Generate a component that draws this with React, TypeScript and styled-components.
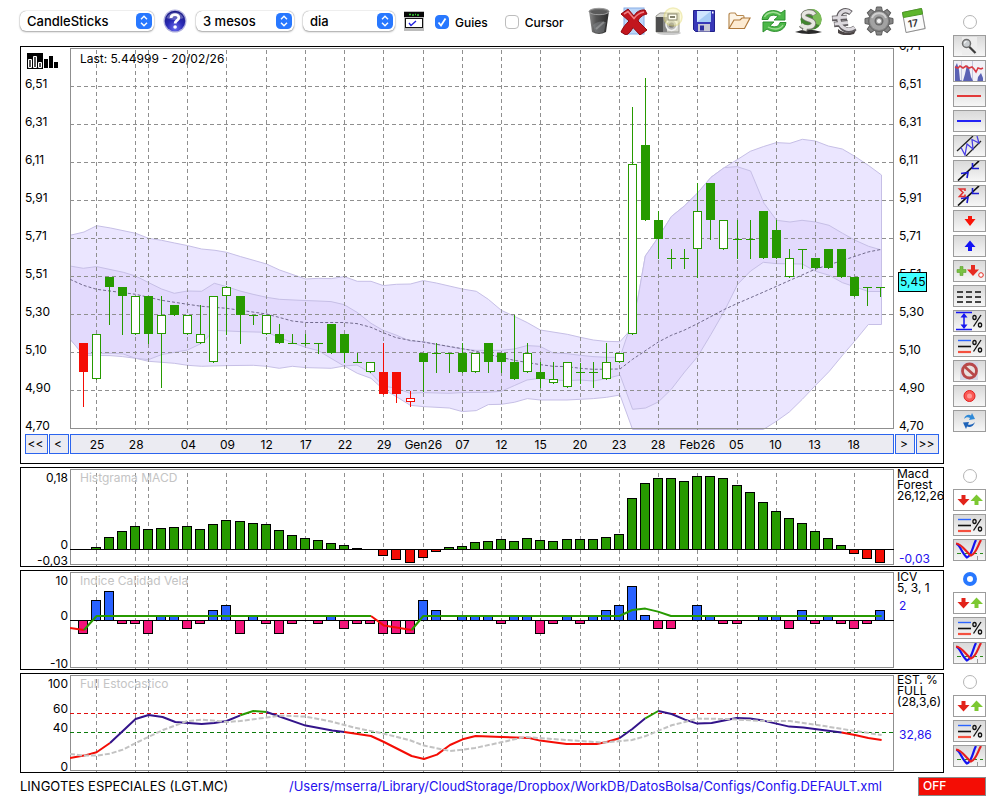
import React from "react";
import styled, { createGlobalStyle, css } from "styled-components";

const GREEN = "#279a00";
const RED = "#f40d05";
const NAVY = "#33148a";
const GRID = "#8f8f8f";

const GlobalStyle = createGlobalStyle`
  * { box-sizing: border-box; }
  body {
    margin: 0;
    background: #fff;
    color: #000;
    font-family: Inter, "Liberation Sans", sans-serif;
    font-size: 12px;
  }
  button, select, input { font: inherit; color: inherit; margin: 0; }
`;

/* ---------- layout ---------- */

const Page = styled.main`
  display: grid;
  grid-template-columns: minmax(0, 1fr) 33px;
  column-gap: 9px;
  row-gap: 3px;
  padding: 0 14px 0 20px;
`;

const Toolbar = styled.header`
  display: flex;
  align-items: center;
  gap: 9px;
  height: 46px;
  padding: 0 14px 4px 0;
`;

const Panel = styled.section`
  border: 1px solid #000;
  overflow: hidden;
`;

const PlotRow = styled.div<{ $height: number }>`
  display: grid;
  grid-template-columns: 49px minmax(0, 1fr) 49px;
  height: ${(p) => p.$height}px;
  overflow: hidden;
`;

const PlotArea = styled.div`
  position: relative;
  padding-top: 1px;
`;

const PlotSvg = styled.svg`
  display: block;
  width: 100%;
`;

const PlotTitle = styled.h2<{ $muted?: boolean }>`
  position: absolute;
  top: ${(p) => (p.$muted ? 1 : 3)}px;
  left: 10px;
  margin: 0;
  font-size: 12px;
  font-weight: 400;
  line-height: 18px;
  color: ${(p) => (p.$muted ? "#c4c4c4" : "#000")};
`;

const PriceAxis = styled.div<{ $right?: boolean }>`
  position: relative;
  padding-left: 4px;
  line-height: 38px;
  ${(p) => p.$right && css`margin-top: -20px; padding-left: 5px;`}
`;

const PriceLabel = styled.div`
  height: 38px;
`;

const AxisIcon = styled.div`
  height: 18px;
  padding: 6px 0 0 2px;
  line-height: 0;
`;

const PriceTag = styled.div`
  position: absolute;
  left: 4px;
  top: 245px;
  padding: 0 1px;
  border: 1px solid #000;
  background: #40ffff;
  line-height: 18px;
`;

/* ---------- date navigation ---------- */

const DateNav = styled.nav`
  display: grid;
  grid-template-columns: 23px 20px minmax(0, 1fr) 20px 23px;
  gap: 1px;
  padding: 0 4px 9px;
`;

const NavButton = styled.button`
  height: 20px;
  padding: 0 2px 0 0;
  border: 1px solid #2b64ee;
  background: #ebebf2;
  line-height: 18px;
  text-align: center;
`;

const DateStrip = styled.div`
  display: grid;
  grid-template-columns: repeat(63, minmax(0, 1fr));
  height: 20px;
  border: 1px solid #2b64ee;
  background: #ebebf2;
`;

const DateLabel = styled.span<{ $slot: number }>`
  grid-row: 1;
  grid-column: ${(p) => p.$slot - 1} / span 4;
  line-height: 20px;
  text-align: center;
`;

/* ---------- indicator panels ---------- */

const AxisSvg = styled.svg`
  display: block;
  width: 49px;
  height: 98px;
`;

const Legend = styled.div`
  padding-left: 3px;
  line-height: 11px;
  white-space: nowrap;
`;

const LegendValue = styled.div<{ $gap: number }>`
  margin-top: ${(p) => p.$gap}px;
  padding-left: 2px;
  line-height: 16px;
  color: #2410ee;
`;

/* ---------- side tools ---------- */

const SideTools = styled.aside<{ $main?: boolean }>`
  display: flex;
  flex-direction: column;
  align-items: center;
  gap: 3px;
  padding-top: ${(p) => (p.$main ? 15 : 2)}px;
`;

const Radio = styled.input`
  appearance: none;
  width: 14px;
  height: 14px;
  margin-bottom: 3px;
  border: 1px solid #b5b5b5;
  border-radius: 50%;
  background: #fff;
  &:checked {
    border: 4px solid #2878ff;
  }
`;

const ToolButton = styled.button<{ $plain?: boolean }>`
  display: flex;
  align-items: center;
  justify-content: center;
  width: 33px;
  height: 22px;
  padding: 0;
  overflow: hidden;
  border: 1px solid #9c9c9c;
  background: ${(p) => (p.$plain ? "#fff" : "linear-gradient(#d9d9d9, #f6f6f6)")};
  svg { display: block; flex: none; }
`;

/* ---------- toolbar controls ---------- */

const SelectBox = styled.span<{ $width: number }>`
  position: relative;
  width: ${(p) => p.$width}px;
  flex: none;
`;

const Select = styled.select`
  appearance: none;
  display: block;
  width: 100%;
  height: 20px;
  padding: 0 20px 1px 7px;
  border: 0;
  border-radius: 6px;
  background: #fff;
  box-shadow: 0 0 1px #777, 0 1px 2px #aaa;
  font-size: 13px;
  font-weight: 500;
  line-height: 18px;
`;

const SelectBadge = styled.svg`
  position: absolute;
  top: 2px;
  right: 2px;
  pointer-events: none;
`;

const IconButton = styled.button`
  display: flex;
  align-items: center;
  justify-content: center;
  flex: none;
  padding: 0;
  border: 0;
  background: none;
  svg { display: block; }
`;

const IconGroup = styled.div`
  display: flex;
  flex: 1;
  justify-content: space-between;
  margin-left: 4px;
  ${IconButton} { width: 32px; height: 32px; }
`;

const CheckLabel = styled.label`
  display: flex;
  align-items: center;
  gap: 6px;
  margin: 2px 6px 0 2px;
  font-weight: 500;
`;

const Check = styled.input`
  appearance: none;
  width: 14px;
  height: 14px;
  border: 1px solid #bdbdbd;
  border-radius: 4px;
  background: #fff;
  &:checked {
    border-color: #2878ff;
    background: #2878ff;
  }
`;

const CheckBoxWrap = styled.span`
  position: relative;
  display: flex;
  svg { position: absolute; inset: 0; pointer-events: none; }
`;

/* ---------- footer ---------- */

const Footer = styled.footer`
  grid-column: 1 / -1;
  display: flex;
  align-items: center;
  height: 20px;
`;

const FooterText = styled.span`
  font-size: 13px;
  line-height: 20px;
`;

const FooterLink = styled.a`
  margin-left: auto;
  margin-right: 36px;
  color: #2410ee;
  font-size: 13px;
  line-height: 20px;
  text-decoration: none;
`;

const OffButton = styled.button`
  width: 68px;
  height: 19px;
  padding: 0 4px;
  border: 1px solid #8a8a8a;
  background: ${RED};
  color: #fff;
  font-weight: 500;
  line-height: 16px;
  text-align: left;
`;

/* ---------- chart data ---------- */

const LEFT = 70;
const WIDTH = 824;
const SLOT = 13.079;
const slotX = (i: number) => Math.floor(LEFT + SLOT * i);

const DATES: [number, string][] = [
  [2, "25"], [5, "28"], [9, "04"], [12, "09"], [15, "12"], [18, "17"], [21, "22"],
  [24, "29"], [27, "Gen26"], [30, "07"], [33, "12"], [36, "15"], [39, "20"], [42, "23"],
  [45, "28"], [48, "Feb26"], [51, "05"], [54, "10"], [57, "13"], [60, "18"],
];
const GUIDES = [2, 5, 6, 9, 12, 15, 18, 21, 24, 27, 30, 33, 36, 39, 42, 45, 48, 51, 54, 57, 60];

const PRICES = ["6,71", "6,51", "6,31", "6,11", "5,91", "5,71", "5,51", "5,30", "5,10", "4,90", "4,70"];

// kind: f = filled, h = hollow, F / H = the same in red; then body top, body bottom, high, low
type Candle = [string, number, number, number, number];
const CANDLES: Candle[] = [
  ["F", 343, 372, 343, 407], ["h", 334, 379, 334, 380], ["f", 277, 287, 277, 325],
  ["f", 287, 296, 287, 335], ["h", 296, 334, 296, 335], ["f", 296, 334, 296, 344],
  ["h", 315, 334, 296, 388], ["f", 305, 315, 305, 316], ["h", 315, 334, 315, 335],
  ["h", 334, 343, 305, 344], ["h", 296, 362, 296, 363], ["h", 287, 296, 286, 335],
  ["f", 296, 315, 296, 344], ["f", 315, 316, 315, 325], ["h", 315, 334, 315, 335],
  ["f", 334, 343, 324, 344], ["f", 343, 344, 334, 344], ["f", 343, 344, 334, 346],
  ["f", 343, 344, 343, 354], ["f", 324, 353, 324, 354], ["f", 334, 353, 334, 363],
  ["f", 362, 363, 353, 363], ["h", 362, 372, 362, 373], ["F", 372, 394, 343, 395],
  ["F", 372, 394, 372, 403], ["H", 398, 402, 391, 407], ["f", 353, 362, 353, 392],
  ["f", 353, 354, 343, 373], ["f", 353, 354, 353, 373], ["f", 353, 372, 343, 373],
  ["h", 353, 372, 353, 373], ["f", 343, 362, 343, 373], ["f", 353, 362, 353, 373],
  ["f", 362, 379, 315, 380], ["h", 353, 372, 343, 373], ["f", 372, 379, 362, 388],
  ["h", 379, 383, 362, 384], ["h", 362, 387, 362, 388], ["f", 372, 373, 363, 384],
  ["f", 372, 373, 362, 388], ["h", 362, 379, 343, 380], ["h", 353, 362, 353, 363],
  ["h", 164, 334, 107, 335], ["f", 145, 220, 78, 221], ["f", 220, 239, 211, 259],
  ["f", 258, 259, 249, 269], ["f", 258, 259, 249, 269], ["h", 211, 249, 183, 278],
  ["f", 183, 220, 183, 240], ["h", 220, 249, 220, 250], ["f", 239, 240, 220, 259],
  ["f", 239, 240, 220, 259], ["f", 211, 258, 211, 259], ["f", 230, 258, 220, 259],
  ["h", 258, 277, 249, 278], ["f", 249, 250, 249, 269], ["f", 258, 268, 258, 269],
  ["f", 249, 268, 249, 269], ["f", 249, 277, 249, 278], ["f", 277, 296, 277, 297],
  ["f", 287, 288, 287, 306], ["f", 287, 288, 287, 297],
];

const RISE = "637.6,300 645.3,256 658.3,237.3 671.3,216.6 684.3,206 697.3,193.3 711,177.3 724.3,167.6";

const OUTER_BAND =
  "70,235.3 84,232 96.7,225.7 110.6,228 135.7,233.3 148.6,238.3 161.6,240.3 174.6,243 187.6,245.6 201.6,249 215,250.3 226.7,252.3 240.6,256.6 266.6,264 279.6,270 305.6,279 318.6,278.3 331.3,278.6 344.3,276.6 357.3,281.3 371,281.3 383.3,285.6 396.3,284.3 410.3,284 423.3,280.6 436.3,283 462.3,289 476.3,291.3 488.3,299.3 501.3,310.3 514.3,316.3 527.3,322.6 540.3,330 567.3,334.3 580.3,337.3 593.3,340 605,341.3 620,341.7 628.3,332.3 " +
  RISE +
  " 737.3,159.6 750.3,151.3 763.3,146.6 776.3,142.6 790,143.3 802.3,139.3 815.3,141 828.3,146 842.3,149 854.3,156 868.3,165.3 881.5,175 " +
  "881.5,324.5 868.3,324.5 854.3,341.6 843.3,354.3 829.3,371.3 815.3,385.6 802.3,399.3 789.3,412 776.3,421.3 763.3,429.5 632.6,429.5 620,395 606.6,397.3 593.3,398.6 567,400 540.3,400 527.3,398.6 514.3,402.3 501.3,404.3 488.3,404.6 476.3,410.6 462.3,411.6 449.3,408 423.3,406.6 410.3,405.3 396.3,396.6 383.3,389.3 371,378.3 357.3,373.3 344.3,366 331.3,368.3 305.6,367.6 292.3,366.3 279.3,368.3 266.6,366.3 253.3,365.3 226.7,365.6 201.6,366.3 187.6,365.3 174.3,363.3 161.6,362.3 148.6,361.3 135.6,358.3 122.6,356.6 110,355.6 84,355.3 70,339";

const INNER_BAND =
  "70,266 83.3,268.3 96.6,266.6 123.3,272.3 135.6,276 148.6,282.6 161.6,289 174.3,293.3 187.6,291 201.6,291.3 214.3,283.3 226.6,286.6 240,291 253,294.3 266.6,297.3 279.3,299.3 300,300.3 318,301 331,301.6 344,304.6 357,312.3 371,323.3 383,330.3 396,335 410,341 423,341.6 436,344.3 462,349 476,350.3 501,350.3 514,349 527,345.6 540,346.3 553,353 567,353.6 580,355.3 593,356.6 606.6,357.3 620,357.3 628.3,332.3 " +
  RISE +
  " 737,166.6 750.6,171 764,203.3 776.6,220.3 790,222 802,220.3 815.6,222 829,225.3 842.6,233.3 854.6,240 868.6,246.3 881.5,250 " +
  "881.5,291.5 868.3,291.5 854.3,286.6 842.3,282.6 829.3,275.3 815.6,271.3 802.3,264 776.3,263.6 763.3,262.3 750.6,271 737.6,284.3 724.6,310.6 711,334.3 697.6,356.6 684.6,372 671.3,389.3 658.3,402 645.6,408 632.6,409.3 620,375 606.6,378.6 593.3,381 580,380 567,380.6 553,380 540,378.3 527,380 514.3,385.6 501.3,391.3 488.3,392.3 462,392.6 449,393.3 423.3,392.6 410,393.3 396.3,388.3 383.3,386 371,373.3 357,365 344,366 331,358.3 318.3,350.6 305.6,347.3 292.3,342.6 279.3,337.3 266.6,332.3 240.3,331.6 214,330.3 201.6,343.3 187.6,350 161.6,354.6 148.6,359.6 135.6,358.3 123.3,354 110,353.3 82,353.5 70,339";

const AVERAGE =
  "70,279.3 83.3,285.3 96.6,289.3 135.6,294.3 161.6,300.3 187.6,304.3 201.6,306.3 226.6,308.3 266.6,314 292.3,321 305.6,322.5 344,322.5 357,323.6 371,327.3 383,332.6 396,337.6 410,340.3 423,342 462,348.6 476,351.3 501,357.3 514,360.3 540,364.6 553,366.3 567,366.6 580,368.3 593,369.3 620,369 632.6,359.3 658.3,342 671.3,335.3 684,330.3 697.6,323.6 724.6,309.3 737.6,303.3 763,292.3 790,280.3 815,269.3 842,260.6 868,252 881.6,249.3";

const MACD_ZERO = 549;
const MACD: (number | null)[] = [
  null, 547, 537, 531, 526, 529, 528, 527, 526, 529, 524, 520, 521, 523, 524, 530, 535, 538, 540,
  543, 545, 548, null, 556, 560, 563, 558, 552, 547, 546, 542, 541, 539, 541, 538, 540, 541, 539,
  539, 539, 537, 534, 498, 483, 478, 478, 481, 476, 476, 478, 485, 492, 502, 511, 518, 523, 531,
  538, 545, 554, 559, 563,
];

const ICV_ZERO = 620;
const ICV: (number | null)[] = [
  634, 600, 591, 624, 624, 634, 616, 616, 629, 624, 610, 605, 634, 616, 624, 634, 624, null, 624,
  616, 629, 624, 624, 634, 634, 634, 600, 610, null, 616, 616, 616, 624, 616, 616, 634, 624, 616,
  624, 616, 610, 605, 586, 615, 629, 629, null, 605, 616, 624, 624, null, 616, 616, 629, 610, 624,
  616, 624, 629, 624, 610,
];

type Segment = [string, string];
const ICV_LINE: Segment[] = [
  [RED, "70,628 84,630"],
  [GREEN, "84,630 96.6,616 371,616"],
  [RED, "371,616 384,625.6 411.6,630"],
  [GREEN, "411.6,630 423.3,616 619.3,616 632.3,610 645.3,608.6 658,611.6 671,616 881.6,616"],
];

const STOCHASTIC: Segment[] = [
  [RED, "70,758 84,755.6 96.6,752.3 110,743"],
  [NAVY, "110,743 135.6,719 148.6,715 162.6,717 175.3,722 201.6,724 214.3,723 226.6,721 240.3,715.3"],
  [GREEN, "240.3,715.3 253.3,711 266.6,712"],
  [NAVY, "266.6,712 305.6,725.6 332.3,730.6 344.3,732"],
  [RED, "344.3,732 371,736 384,742 411.6,756 424,759 437,754.6 450,745 462.6,739.3 475.6,736 501.6,737 529.3,738 540,740.6 566.6,744 596.6,744 606.6,742 619.3,738.3"],
  [NAVY, "619.3,738.3 632.3,729 645.3,718.3"],
  [GREEN, "645.3,718.3 658.3,711"],
  [NAVY, "658.3,711 671.6,714 685,719.6 697.3,723.6 711.6,723 736.6,718 750,718.6 763.3,720.6 789.3,726.6 803.3,727.6 841.6,732.6"],
  [RED, "841.6,732.6 855,735 868.3,738 881.6,740"],
];

const SIGNAL =
  "70,754 83,755.6 96.6,755.6 110,753.6 123,749.6 136.6,742.6 163,730 186.6,721.3 201.6,719.6 228,722 240,721 266.6,717.6 280,715.6 305.6,716.6 330,721.3 353,727.3 385,734 410,740.3 424,745.6 450,751 463,749.6 475,748 500,742.6 525,737 580,741 603,742.6 632,740 645,736.3 671.6,725.3 685,722 697,718.6 726.6,719 763,721 790,721 815,724.6 855,731 881.6,735";

/* ---------- charts ---------- */

function Frame({ top, bottom }: { top: number; bottom: number }) {
  return (
    <path
      d={`M70.5 ${bottom}.5V${top}.5H893.5V${bottom}.5Z`}
      fill="none"
      stroke={GRID}
      shapeRendering="crispEdges"
    />
  );
}

function Guides({ from, to }: { from: number; to: number }) {
  return (
    <g stroke={GRID} strokeDasharray="4 3" shapeRendering="crispEdges">
      {GUIDES.map((i) => (
        <line key={i} x1={slotX(i) + 0.5} x2={slotX(i) + 0.5} y1={from} y2={to} />
      ))}
    </g>
  );
}

function Bars({ data, zero, up, down }: { data: (number | null)[]; zero: number; up: string; down: string }) {
  return (
    <g stroke="#000" shapeRendering="crispEdges">
      {data.map((y, k) => {
        if (y === null) return null;
        const top = Math.min(y, zero);
        const height = Math.max(Math.abs(y - zero) - (y > zero ? 1 : 0), 1);
        return (
          <rect key={k} x={slotX(k + 1) - 4.5} y={top + 0.5} width={9} height={height} fill={y < zero ? up : down} />
        );
      })}
      <line x1={70} x2={894} y1={zero + 0.5} y2={zero + 0.5} />
    </g>
  );
}

function Segments({ data }: { data: Segment[] }) {
  return (
    <g fill="none" strokeWidth={2} strokeLinejoin="round">
      {data.map(([color, points], k) => (
        <polyline key={k} points={points} stroke={color} />
      ))}
    </g>
  );
}

function PriceChart() {
  return (
    <PlotSvg viewBox={`${LEFT} 48 ${WIDTH} 382`} height={382} preserveAspectRatio="none">
      <polygon points={OUTER_BAND} fill="#ebe6ff" stroke="#c6bfe6" />
      <polygon points={INNER_BAND} fill="#e3dafd" stroke="#c6bfe6" />
      <Frame top={48} bottom={428} />
      <Guides from={50} to={430} />
      <g stroke={GRID} strokeDasharray="4 3" shapeRendering="crispEdges">
        {[86, 124, 162, 200, 238, 276, 314, 352, 390].map((y) => (
          <line key={y} x1={70} x2={894} y1={y + 0.5} y2={y + 0.5} />
        ))}
      </g>
      <polyline points={AVERAGE} fill="none" stroke="#716a8c" strokeDasharray="3 2" />
      <g shapeRendering="crispEdges">
        {CANDLES.map(([kind, top, bottom, high, low], k) => {
          const x = slotX(k + 1);
          const color = kind < "a" ? RED : GREEN;
          const hollow = kind === "h" || kind === "H";
          return (
            <g key={k} fill={color}>
              <rect x={x} y={high} width={1} height={low - high} />
              {hollow ? (
                <rect x={x - 3.5} y={top + 0.5} width={8} height={bottom - top - 1} fill="#fff" stroke={color} />
              ) : (
                <rect x={x - 4} y={top} width={9} height={bottom - top} />
              )}
            </g>
          );
        })}
      </g>
    </PlotSvg>
  );
}

function Axis({ ticks }: { ticks: [string, number][] }) {
  return (
    <AxisSvg>
      {ticks.map(([label, y]) => (
        <text key={label} x={47} y={y} textAnchor="end" fontSize={12}>
          {label}
        </text>
      ))}
    </AxisSvg>
  );
}

interface IndicatorProps {
  title: string;
  top: number;
  ticks: [string, number][];
  legend: string[];
  value: string;
  gap: number;
  children: React.ReactNode;
}

function Indicator({ title, top, ticks, legend, value, gap, children }: IndicatorProps) {
  return (
    <Panel>
      <PlotRow $height={98}>
        <Axis ticks={ticks} />
        <PlotArea>
          <PlotTitle $muted>{title}</PlotTitle>
          <PlotSvg viewBox={`${LEFT} ${top} ${WIDTH} 97`} height={97} preserveAspectRatio="none">
            <Frame top={top} bottom={top + 95} />
            <Guides from={top + 4} to={top + 97} />
            {children}
          </PlotSvg>
        </PlotArea>
        <Legend>
          {legend.map((line) => (
            <div key={line}>{line}</div>
          ))}
          <LegendValue $gap={gap}>{value}</LegendValue>
        </Legend>
      </PlotRow>
    </Panel>
  );
}

/* ---------- side tool icons ---------- */

const Percent = () => (
  <g fill="none" stroke="#111">
    <path d="M18.5 14.5 26 3" strokeWidth="1.3" />
    <ellipse cx="19.5" cy="5.5" rx="1.6" ry="2" strokeWidth="1.3" />
    <ellipse cx="25" cy="13" rx="1.6" ry="2" strokeWidth="1.3" />
  </g>
);

const PercentLinesIcon = () => (
  <svg width="31" height="20" viewBox="0 0 31 20">
    <path d="M4 4.5H17" stroke="#2b64ff" strokeWidth="1.4" />
    <path d="M4 10.5H17" stroke="#111" strokeWidth="1.6" />
    <path d="M4 16H17" stroke="#f4503f" strokeWidth="2.2" />
    <g transform="translate(1 1)"><Percent /></g>
  </svg>
);

const ArrowsIcon = () => (
  <svg width="31" height="20" viewBox="0 0 31 20">
    <path d="M7.5 5h4v4h4L9.5 15.5 3.5 9h4z" fill="#e2231a" />
    <path d="M20.5 15h4v-4h4.5L22.5 4.5 16.5 11h4z" fill="#7cc832" />
  </svg>
);

const CrossIcon = () => (
  <svg width="31" height="20" viewBox="0 0 31 20">
    <path d="M3 13.5H7M11 13.5h5M20 13.500h3M26 13.500h3" stroke="#2f8a1e" />
    <path d="M23.500 16V20" stroke="#999" />
    <path d="M2 4C6 4 8 14 13 17.500 18 16 19 5 22 0" fill="none" stroke="#1414f0" strokeWidth="2.200" />
    <path d="M2 3.500C8 4 12 12 17 15.500 22 14 24 5 27 0" fill="none" stroke="#e62020" strokeWidth="2.200" />
  </svg>
);

const DiagonalArrows = () => (
  <>
    <path d="M4 19.500 25 0" stroke="#111" strokeWidth="1.700" />
    <path d="M7 12.500 14 11.500 13 17M18.500 2V7.500H25" fill="none" stroke="#1a1ad2" strokeWidth="1.600" />
  </>
);

const SIDE_ICONS: [string, React.ReactNode][] = [
  ["Zoom", (
    <svg width="31" height="20" viewBox="0 0 31 20">
      <rect x="8" y="1" width="15" height="18" fill="#ededed" />
      <path d="M15 10.500 21.500 17" stroke="#3c3c3c" strokeWidth="2.200" />
      <circle cx="12.500" cy="7.500" r="4" fill="#c9cdd0" stroke="#6f6f6f" strokeWidth="1.500" />
      <path d="M10.500 7.500a2 2 0 0 1 2-2" fill="none" stroke="#fff" />
    </svg>
  )],
  ["Volume chart", (
    <svg width="33" height="22" viewBox="0 0 33 22">
      <rect width="33" height="22" fill="#f1f1f7" />
      <path d="M8.500 0V22M19.500 0V22" stroke="#c3c6dc" />
      <path d="M2 21V7l2-4 2 7 1 10 3 1 2-7 2-9 2 3 2 9 2 4 2 2 1-1 1 1 1-6 3-4 2 5v4z" fill="#5b62b4" />
      <path d="M2 7 5 8 7 6 10 8 13 6 16 8 19 7 21 9 23 12 25 8 28 9 30 8" fill="none" stroke="#d83a44" strokeWidth="1.600" />
    </svg>
  )],
  ["Red line", <svg width="31" height="20"><path d="M3 10H27" stroke="#e23a3a" strokeWidth="2" /></svg>],
  ["Blue line", <svg width="31" height="20"><path d="M3 10H27" stroke="#2222f5" strokeWidth="2" /></svg>],
  ["Channel", (
    <svg width="31" height="20" viewBox="0 0 31 20">
      <path d="M3 15 19 0M12 20 27 5" stroke="#222" strokeWidth="1.300" />
      <path d="M7 11.500 11 19 13 8 19 13 18 3.500 25 7 23 0" fill="none" stroke="#4a40e6" strokeWidth="1.300" />
    </svg>
  )],
  ["Trend", <svg width="31" height="20" viewBox="0 0 31 20"><DiagonalArrows /></svg>],
  ["Trend sum", (
    <svg width="31" height="20" viewBox="0 0 31 20">
      <DiagonalArrows />
      <path d="M11 5V3H5.500L9 6.500 5.500 10.500H11V8.500" fill="none" stroke="#e03030" strokeWidth="1.600" />
    </svg>
  )],
  ["Sell mark", <svg width="31" height="20"><path d="M14 5h4v3h3.500L16 15 10.500 8H14z" fill="#fa1408" /></svg>],
  ["Buy mark", <svg width="31" height="20"><path d="M14 15h4v-4h3.500L16 4.500 10.500 11H14z" fill="#1212f5" /></svg>],
  ["Marks", (
    <svg width="31" height="20" viewBox="0 0 31 20">
      <path d="M6 5.500h3v3h3v3H9v3H6v-3H3v-3h3z" fill="#7ac143" stroke="#5aa02c" strokeWidth=".6" />
      <path d="M17 4h4v4.500h4L19 15l-6-6.500h4z" fill="#e62a20" />
      <circle cx="27" cy="14" r="2.300" fill="#fff" stroke="#e62a20" />
    </svg>
  )],
  ["Dashes", (
    <svg width="31" height="20">
      <path d="M3 6h24M3 11h24M3 16h24" stroke="#444" strokeWidth="2" strokeDasharray="6 3" />
    </svg>
  )],
  ["Range percent", (
    <svg width="31" height="20" viewBox="0 0 31 20">
      <path d="M2 1.500H18M2 18.500H18M10 3V17" stroke="#1616f0" strokeWidth="1.500" />
      <path d="M10 2 13.500 6.500H6.500zM10 18 13.500 13.500H6.500z" fill="#1616f0" />
      <g transform="translate(1 1)"><Percent /></g>
    </svg>
  )],
  ["Percent lines", <PercentLinesIcon />],
  ["Forbid", (
    <svg width="31" height="20" viewBox="0 0 31 20">
      <rect x="6" y="1" width="18" height="18" fill="#d5d7e6" />
      <circle cx="15.500" cy="10" r="7" fill="#e9dede" stroke="#b8474a" strokeWidth="2.800" />
      <path d="M10.500 5.500 20.500 14.500" stroke="#b8474a" strokeWidth="2.800" />
    </svg>
  )],
  ["Record", (
    <svg width="31" height="20">
      <circle cx="15.500" cy="10" r="5.500" fill="#fa5a55" stroke="#e02020" />
      <circle cx="15.500" cy="10" r="2.500" fill="#ff9a96" />
    </svg>
  )],
  ["Reload", (
    <svg width="31" height="20" viewBox="0 0 31 20">
      <path d="M10 8C11 4 15 3 17 4.500L18 2 21 8 15 9 16 7C14 6 12 6 10 8z" fill="#2f8ad8" />
      <path d="M21 11C20 15 16 17 13 15.500L12 18 9 11.500 15 11 14 13.500C16.500 14 19 13.500 21 11z" fill="#1f63b8" />
    </svg>
  )],
];

/* ---------- toolbar icons ---------- */

const HelpIcon = () => (
  <svg width="24" height="24" viewBox="0 0 24 24">
    <defs>
      <radialGradient id="help" cx="50%" cy="85%" r="80%">
        <stop offset="0" stopColor="#6a6cf0" />
        <stop offset=".5" stopColor="#2a2ab4" />
        <stop offset="1" stopColor="#1a1a86" />
      </radialGradient>
    </defs>
    <circle cx="12" cy="12" r="11.500" fill="#b0b0de" />
    <circle cx="12" cy="12" r="10.300" fill="url(#help)" />
    <path d="M3.500 9a8.800 7.500 0 0 1 17 0q-8 4-17 0z" fill="#fff" opacity=".28" />
    <path d="M8 9C8 4.500 16 4.500 15.800 8.800 15.700 11.500 12.100 11.500 12.100 14.500" fill="none" stroke="#fff" strokeWidth="2.800" />
    <circle cx="12.100" cy="18" r="1.800" fill="#fff" />
  </svg>
);

const PlanIcon = () => (
  <svg width="20" height="20" viewBox="0 0 20 20">
    <rect width="20" height="20" fill="#bcbcbc" />
    <rect x="0" y="1" width="20" height="5" fill="#080808" />
    <path d="M5 3.500h2M8 4h2M11 3.500h1M13 4h2" stroke="#2fd02f" strokeWidth="1.600" />
    <rect x="1.500" y="7.500" width="17" height="9" fill="#fff" stroke="#111" />
    <path d="M5 12 7 14.500 12 10" fill="none" stroke="#2020e0" strokeWidth="1.400" />
  </svg>
);

const TOOLBAR_ICONS: [string, React.ReactNode][] = [
  ["Trash", (
    <svg width="22" height="28" viewBox="0 0 22 28">
      <defs>
        <linearGradient id="bin">
          <stop offset="0" stopColor="#8a8a8a" /><stop offset=".35" stopColor="#555" /><stop offset="1" stopColor="#2a2a2a" />
        </linearGradient>
      </defs>
      <path d="M1 4 4 25q7 4 14 0L21 4z" fill="url(#bin)" />
      <ellipse cx="11" cy="4.500" rx="10" ry="3.200" fill="#6c6c6c" stroke="#9d9d9d" />
      <ellipse cx="11" cy="5" rx="8" ry="2" fill="#5a5a5a" />
      <path d="M5 18q5-5 13-3l-2 10q-6 2-9 0z" fill="#9aa0a5" opacity=".35" />
      <path d="M8 22 16 15" stroke="#c5c5c5" opacity=".4" strokeWidth="2" />
    </svg>
  )],
  ["Delete", (
    <svg width="28" height="28" viewBox="0 0 28 28">
      <rect x="4" y="1" width="20" height="26" fill="#bcd6f8" stroke="#88aee6" />
      <path d="M1 7 8 2 14 9C16 5 20 2.500 25 3L27 7C22 8 19 11 18 14L27 23 20 28 13 20.500C11 24 9 27 6 28L1 25C3 20 6 17 9 14z" fill="#c2161e" stroke="#8e0810" />
      <path d="M4 7 8 4.500 14 11.500Q18 6 24 5" fill="none" stroke="#ee8084" strokeWidth="1.500" />
    </svg>
  )],
  ["Snapshot", (
    <svg width="30" height="30" viewBox="0 0 30 30">
      <ellipse cx="15" cy="27" rx="12" ry="2" fill="#ccc" />
      <path d="M2 10 6 7H25V26H2z" fill="#dadad4" stroke="#9c9c96" />
      <rect x="2" y="11" width="7" height="15" fill="#4e4e4e" />
      <rect x="9" y="11" width="4" height="15" fill="#858585" />
      <circle cx="17.500" cy="19" r="5.500" fill="#b8b8b8" stroke="#f2f2f2" strokeWidth="1.500" />
      <circle cx="17.500" cy="19" r="2.600" fill="#6c6c74" />
      <circle cx="19" cy="11" r="9" fill="#fbf7b8" opacity=".5" stroke="#e4dc78" strokeWidth="1.500" />
      <rect x="14" y="8" width="9" height="6" fill="#fffff0" stroke="#88866a" />
      <path d="M16 11h5" stroke="#5a5840" strokeWidth="1.500" />
    </svg>
  )],
  ["Save", (
    <svg width="22" height="22" viewBox="0 0 22 22">
      <path d="M.5.500h21v21H2.500L.500 19.500z" fill="#3838b8" stroke="#20208a" />
      <rect x="4" y="1" width="14" height="11" fill="#cfe6ff" />
      <path d="M4 12 18 1V12z" fill="#a6ccf6" />
      <rect x="5" y="14" width="12" height="7.500" fill="#c8c8d4" />
      <rect x="7" y="15.500" width="4" height="5" fill="#2c2ca0" />
      <rect x="19" y="1.500" width="1.500" height="2" fill="#fff" />
    </svg>
  )],
  ["Open", (
    <svg width="24" height="20" viewBox="0 0 24 20">
      <path d="M2 17V4Q2 2 4 2H8L10 4.500H16Q17 4.500 17 6V9" fill="#fdf4e6" stroke="#b78a52" strokeWidth="1.200" />
      <path d="M2 17.500 7 9H13L15 7H23L17.500 17.500z" fill="#fdebd2" stroke="#b07a3c" strokeWidth="1.200" />
    </svg>
  )],
  ["Refresh", (
    <svg width="26" height="26" viewBox="0 0 26 26">
      <path d="M1 11.500C2 2 14 .5 20 5L24 2V12H13L17 8.500C13 6 8 7 7 11.500z" fill="#4cb848" stroke="#2f8f30" />
      <path d="M25 14.500C24 24 12 25.500 6 21L2 24V14H13L9 17.500C13 20 18 19 19 14.500z" fill="#4cb848" stroke="#2f8f30" />
      <path d="M3.500 9C6 4 14 2.500 19.500 7M22 17C19 22 12 22 7 19" fill="none" stroke="#a0dc94" strokeWidth="1.400" />
    </svg>
  )],
  ["Dollar", (
    <svg width="28" height="28" viewBox="0 0 28 28">
      <path d="M0 25Q12 20 27 25 14 29 0 25z" fill="#2a2a2a" />
      <circle cx="16" cy="12.500" r="10.500" fill="#41852e" />
      <path d="M16 2a10.500 10.500 0 0 1 9 16Q19 18 18 11 18 5 12 3z" fill="#7cbc58" />
      <path d="M19.500 8C17 3.500 8 4.500 8.500 9 9 13 19 12 18.500 16.500 18 21.500 9 21.500 6 18M10.500 21 9.500 24" fill="none" stroke="#77776f" strokeWidth="5.400" />
      <path d="M19.500 7.500C17 3.500 8 4.500 8.500 9 9 13 19 12 18.500 16.500 18 21 9 21 6 17.500M10.500 20.500 9.500 23.500" fill="none" stroke="#e6e6e0" strokeWidth="3.600" />
    </svg>
  )],
  ["Euro", (
    <svg width="28" height="28" viewBox="0 0 28 28">
      <path d="M8 22Q17 29 26 23L24 27Q15 30 8 26z" fill="#4a4444" />
      <path d="M21 6C15 1 8 5 9 13 10 22 18 26 25 21M2 11.500 17 10.500M4 17.500 18 16" fill="none" stroke="#5e5a5e" strokeWidth="5.400" />
      <path d="M20.500 5.500C15 1 8 5 9 13 10 21 18 25 24.500 20.500M2.500 11 17 10M4.500 17 18 15.500" fill="none" stroke="#dcd9de" strokeWidth="3.200" />
    </svg>
  )],
  ["Settings", (
    <svg width="30" height="30" viewBox="0 0 30 30">
      <g fill="#858585">
        {[0, 45, 90, 135, 180, 225, 270, 315].map((a) => (
          <path key={a} d="M11.500 6 12.500 1H17.500L18.500 6z" transform={`rotate(${a} 15 15)`} stroke="#5c5c5c" />
        ))}
        <circle cx="15" cy="15" r="10.500" stroke="#666" />
      </g>
      <circle cx="15" cy="15" r="9" fill="#a2a2a2" />
      <path d="M8 12a7.500 7.500 0 0 1 14 0" fill="none" stroke="#cfcfcf" strokeWidth="2" />
      <circle cx="15" cy="15" r="4.500" fill="#6a6a6a" />
      <circle cx="15" cy="15" r="2.600" fill="#f4f4f4" stroke="#9c9c9c" />
    </svg>
  )],
  ["Calendar", (
    <svg width="26" height="26" viewBox="0 0 26 26">
      <path d="M2 5 21 1 25 21 5 25z" fill="#d0d0d0" />
      <path d="M1.500 4.500 20.500.500 24 20.500 5 24.500z" fill="#fbfbfb" stroke="#8f8f8f" />
      <path d="M1.500 4.500 20.500.500 21.500 6 2.500 9.500z" fill="#5db52c" stroke="#4a9a22" />
      <text x="7" y="19" fontSize="10" fontWeight="600" fill="#333" transform="rotate(-8 12 16)">17</text>
    </svg>
  )],
];

/* ---------- controls ---------- */

function DropDown({ label, value, width }: { label: string; value: string; width: number }) {
  return (
    <SelectBox $width={width}>
      <Select aria-label={label} defaultValue={value}>
        <option>{value}</option>
      </Select>
      <SelectBadge width="16" height="16" viewBox="0 0 16 16">
        <rect width="16" height="16" rx="4.5" fill="#2878ff" />
        <path d="M5 6.300 8 3.300 11 6.300M5 9.700 8 12.700 11 9.700" fill="none" stroke="#fff" strokeWidth="1.400" />
      </SelectBadge>
    </SelectBox>
  );
}

function CheckField({ label, checked }: { label: string; checked?: boolean }) {
  return (
    <CheckLabel>
      <CheckBoxWrap>
        <Check type="checkbox" defaultChecked={checked} />
        {checked && (
          <svg width="14" height="14" viewBox="0 0 14 14">
            <path d="M3.500 7.500 6 10.500 10.500 3.500" fill="none" stroke="#fff" strokeWidth="1.800" />
          </svg>
        )}
      </CheckBoxWrap>
      {label}
    </CheckLabel>
  );
}

function IndicatorTools({ name, checked }: { name: string; checked?: boolean }) {
  return (
    <SideTools>
      <Radio type="radio" name="active-panel" aria-label={name} defaultChecked={checked} />
      <ToolButton $plain aria-label={`${name} signals`}><ArrowsIcon /></ToolButton>
      <ToolButton aria-label={`${name} levels`}><PercentLinesIcon /></ToolButton>
      <ToolButton aria-label={`${name} crossings`}><CrossIcon /></ToolButton>
    </SideTools>
  );
}

export default function App() {
  return (
    <Page>
      <GlobalStyle />
      <div>
        <Toolbar>
          <DropDown label="Chart type" value="CandleSticks" width={134} />
          <IconButton aria-label="Help"><HelpIcon /></IconButton>
          <DropDown label="Period" value="3 mesos" width={98} />
          <DropDown label="Interval" value="dia" width={92} />
          <IconButton aria-label="Plan"><PlanIcon /></IconButton>
          <CheckField label="Guies" checked />
          <CheckField label="Cursor" />
          <IconGroup>
            {TOOLBAR_ICONS.map(([name, icon]) => (
              <IconButton key={name} aria-label={name}>{icon}</IconButton>
            ))}
          </IconGroup>
        </Toolbar>
        <Panel>
          <PlotRow $height={387}>
            <PriceAxis>
              <AxisIcon>
                <svg width="31" height="16" viewBox="0 0 31 16">
                  <rect width="16" height="16" />
                  <path d="M1.500 14.500V6.500H4.500V14.500zM6.500 14.500V3.500H9.500V14.500zM11.500 14.500V9.500H14.500V14.500z" fill="#555" stroke="#fff" />
                  <path d="M17 6h4v9h-4zM22 3h4v12h-4zM27 9h4v6h-4z" />
                </svg>
              </AxisIcon>
              {PRICES.slice(1).map((p) => (
                <PriceLabel key={p}>{p}</PriceLabel>
              ))}
            </PriceAxis>
            <PlotArea>
              <PriceChart />
              <PlotTitle>Last: 5.44999 - 20/02/26</PlotTitle>
            </PlotArea>
            <PriceAxis $right>
              {PRICES.map((p) => (
                <PriceLabel key={p}>{p}</PriceLabel>
              ))}
              <PriceTag>5,45</PriceTag>
            </PriceAxis>
          </PlotRow>
          <DateNav>
            <NavButton>&lt;&lt;</NavButton>
            <NavButton>&lt;</NavButton>
            <DateStrip>
              {DATES.map(([slot, label]) => (
                <DateLabel key={slot} $slot={slot}>{label}</DateLabel>
              ))}
            </DateStrip>
            <NavButton>&gt;</NavButton>
            <NavButton>&gt;&gt;</NavButton>
          </DateNav>
        </Panel>
      </div>
      <SideTools $main>
        <Radio type="radio" name="active-panel" aria-label="Price" />
        {SIDE_ICONS.map(([name, icon]) => (
          <ToolButton key={name} aria-label={name}>{icon}</ToolButton>
        ))}
      </SideTools>

      <Indicator
        title="Histgrama MACD"
        top={469}
        ticks={[["0,18", 14], ["0", 81], ["-0,03", 97]]}
        legend={["Macd", "Forest", "26,12,26"]}
        value="-0,03"
        gap={50}
      >
        <Bars data={MACD} zero={MACD_ZERO} up={GREEN} down={RED} />
      </Indicator>
      <IndicatorTools name="MACD" />

      <Indicator
        title="Indice Calidad Vela"
        top={572}
        ticks={[["10", 14], ["0", 49], ["-10", 97]]}
        legend={["ICV", "5, 3, 1"]}
        value="2"
        gap={5}
      >
        <Bars data={ICV} zero={ICV_ZERO} up="#2962ff" down="#f2147a" />
        <Segments data={ICV_LINE} />
      </Indicator>
      <IndicatorTools name="ICV" checked />

      <Indicator
        title="Full Estocastico"
        top={675}
        ticks={[["100", 14], ["60", 39], ["40", 58], ["0", 97]]}
        legend={["EST. %", "FULL", "(28,3,6)"]}
        value="32,86"
        gap={20}
      >
        <g strokeDasharray="4 3" shapeRendering="crispEdges">
          <line x1={70} x2={894} y1={713.5} y2={713.5} stroke="#e01010" />
          <line x1={70} x2={894} y1={732.5} y2={732.5} stroke="#0c7a0c" />
        </g>
        <Segments data={STOCHASTIC} />
        <polyline points={SIGNAL} fill="none" stroke="#c2c2c2" strokeWidth={2} strokeDasharray="5 2" />
      </Indicator>
      <IndicatorTools name="Stochastic" />

      <Footer>
        <FooterText>LINGOTES ESPECIALES (LGT.MC)</FooterText>
        <FooterLink href="#config">
          /Users/mserra/Library/CloudStorage/Dropbox/WorkDB/DatosBolsa/Configs/Config.DEFAULT.xml
        </FooterLink>
        <OffButton>OFF</OffButton>
      </Footer>
    </Page>
  );
}
